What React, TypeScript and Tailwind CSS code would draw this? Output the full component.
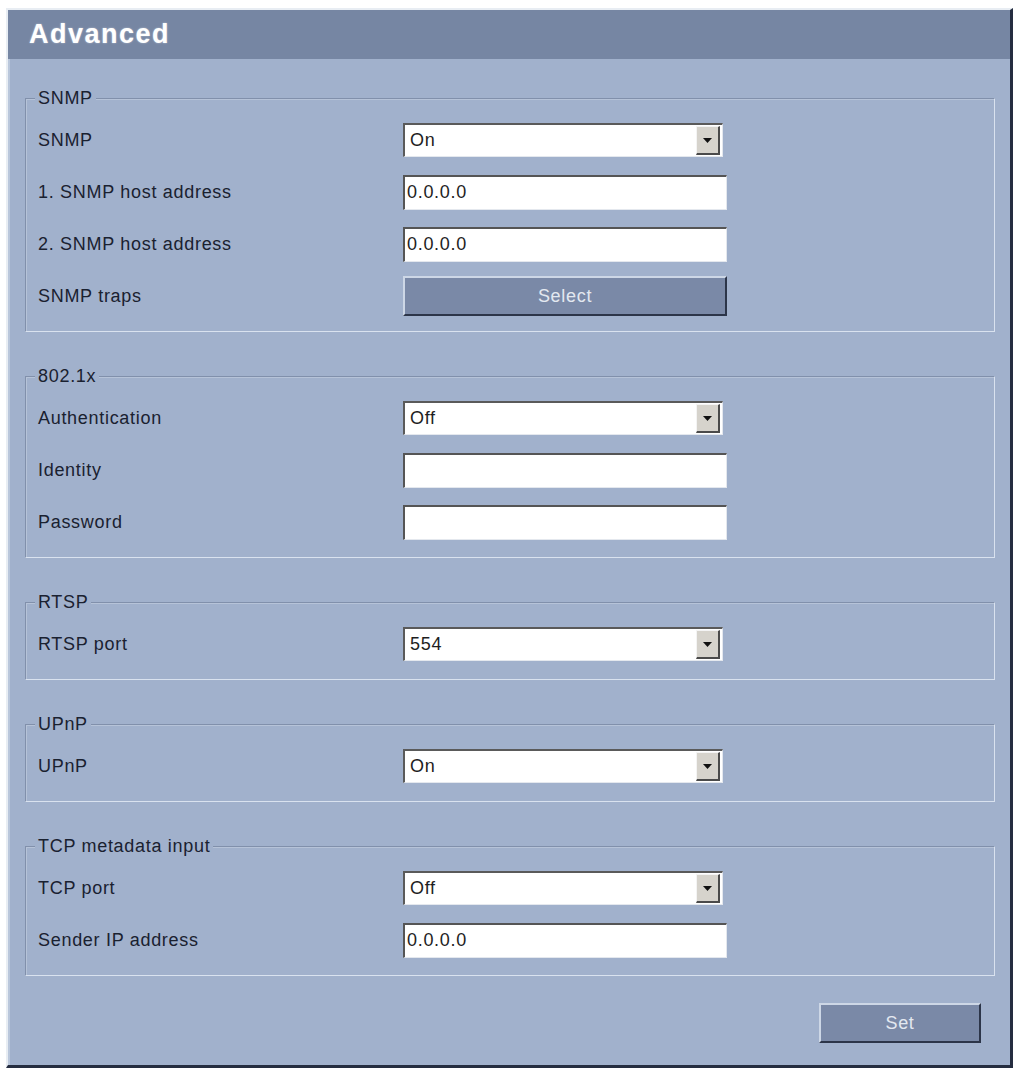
import React from "react";

const font = "font-['Liberation_Sans',Arial,sans-serif]";

type Field =
  | { label: string; kind: "select"; value: string }
  | { label: string; kind: "input"; value: string }
  | { label: string; kind: "button"; value: string };

const groups: { title: string; fields: Field[] }[] = [
  {
    title: "SNMP",
    fields: [
      { label: "SNMP", kind: "select", value: "On" },
      { label: "1. SNMP host address", kind: "input", value: "0.0.0.0" },
      { label: "2. SNMP host address", kind: "input", value: "0.0.0.0" },
      { label: "SNMP traps", kind: "button", value: "Select" },
    ],
  },
  {
    title: "802.1x",
    fields: [
      { label: "Authentication", kind: "select", value: "Off" },
      { label: "Identity", kind: "input", value: "" },
      { label: "Password", kind: "input", value: "" },
    ],
  },
  {
    title: "RTSP",
    fields: [{ label: "RTSP port", kind: "select", value: "554" }],
  },
  {
    title: "UPnP",
    fields: [{ label: "UPnP", kind: "select", value: "On" }],
  },
  {
    title: "TCP metadata input",
    fields: [
      { label: "TCP port", kind: "select", value: "Off" },
      { label: "Sender IP address", kind: "input", value: "0.0.0.0" },
    ],
  },
];

function Dropdown({ value }: { value: string }) {
  return (
    <div className="w-[320px] h-[34px] bg-white flex items-center border-t-2 border-l-2 border-t-[#5a5a5a] border-l-[#5a5a5a] border-b border-r border-b-[#e4e8ee] border-r-[#e4e8ee]">
      <span className="flex-1 pl-[5px] text-[#1e1e1e]">{value}</span>
      <div className="w-[24px] h-[29px] mr-[2px] bg-[#d6d3cc] flex items-center justify-center border-t border-l border-t-[#f4f4f4] border-l-[#f4f4f4] border-b-2 border-r-2 border-b-[#4a4a4a] border-r-[#4a4a4a]">
        <svg width="9" height="5" viewBox="0 0 9 5">
          <path d="M0 0h9L4.5 5z" fill="#111" />
        </svg>
      </div>
    </div>
  );
}

function TextBox({ value }: { value: string }) {
  return (
    <input
      readOnly
      defaultValue={value}
      className={`w-[324px] h-[35px] bg-white pl-[2px] text-[#1e1e1e] outline-none border-t-2 border-l-2 border-t-[#555] border-l-[#555] border-b border-r border-b-[#e4e8ee] border-r-[#e4e8ee] text-[18px] tracking-[0.7px] ${font}`}
    />
  );
}

function FlatButton({ label, width }: { label: string; width: string }) {
  return (
    <button
      className={`${width} h-[40px] bg-[#7a89a7] text-[#e3e8f0] text-[18px] tracking-[0.7px] border-t-2 border-l-2 border-t-[#cdd7e6] border-l-[#cdd7e6] border-b-2 border-r-2 border-b-[#2c3549] border-r-[#2c3549] ${font}`}
    >
      {label}
    </button>
  );
}

function Group({ title, fields, first }: { title: string; fields: Field[]; first?: boolean }) {
  return (
    <fieldset
      className={`${first ? "" : "mt-[35px]"} pl-[9px] pt-[7px] pb-[9px] border border-t-[#8190ab] border-l-[#8190ab] border-b-[#d9e2ef] border-r-[#d9e2ef] shadow-[inset_1px_1px_0_#b6c3d8]`}
    >
      <legend className="px-[3px] leading-[18px] bg-[#a1b1cc] text-[#1a2130]">{title}</legend>
      {fields.map((f) => (
        <div key={f.label} className="flex items-center h-[52px]">
          <div className="w-[368px] pl-[3px] text-[#1a2130]">{f.label}</div>
          {f.kind === "select" && <Dropdown value={f.value} />}
          {f.kind === "input" && <TextBox value={f.value} />}
          {f.kind === "button" && <FlatButton label={f.value} width="w-[324px]" />}
        </div>
      ))}
    </fieldset>
  );
}

export default function App() {
  return (
    <div className={`min-h-screen bg-white pt-[8px] pl-[6px] text-[18px] tracking-[0.7px] ${font}`}>
      <div className="w-[1007px] h-[1060px] bg-[#a1b1cc] flex flex-col border-t-2 border-l-2 border-t-[#e8edf3] border-l-[#e8edf3] border-r-[3px] border-b-[3px] border-r-[#252d40] border-b-[#252d40] shadow-[inset_2px_0_0_#bac7db]">
        {/* title bar */}
        <div className="h-[49px] bg-[#7686a3] flex items-center pl-[21px]">
          <h1 className="text-white font-bold text-[27px] tracking-[1.5px] leading-none [text-shadow:0_0_2px_rgba(255,255,255,0.5)]">
            Advanced
          </h1>
        </div>

        <div className="flex-1 pt-[30px] pl-[17px] pr-[15px]">
          {groups.map((g, i) => (
            <Group key={g.title} title={g.title} fields={g.fields} first={i === 0} />
          ))}

          <div className="flex justify-end mt-[27px] pr-[14px]">
            <FlatButton label="Set" width="w-[162px]" />
          </div>
        </div>
      </div>
    </div>
  );
}
